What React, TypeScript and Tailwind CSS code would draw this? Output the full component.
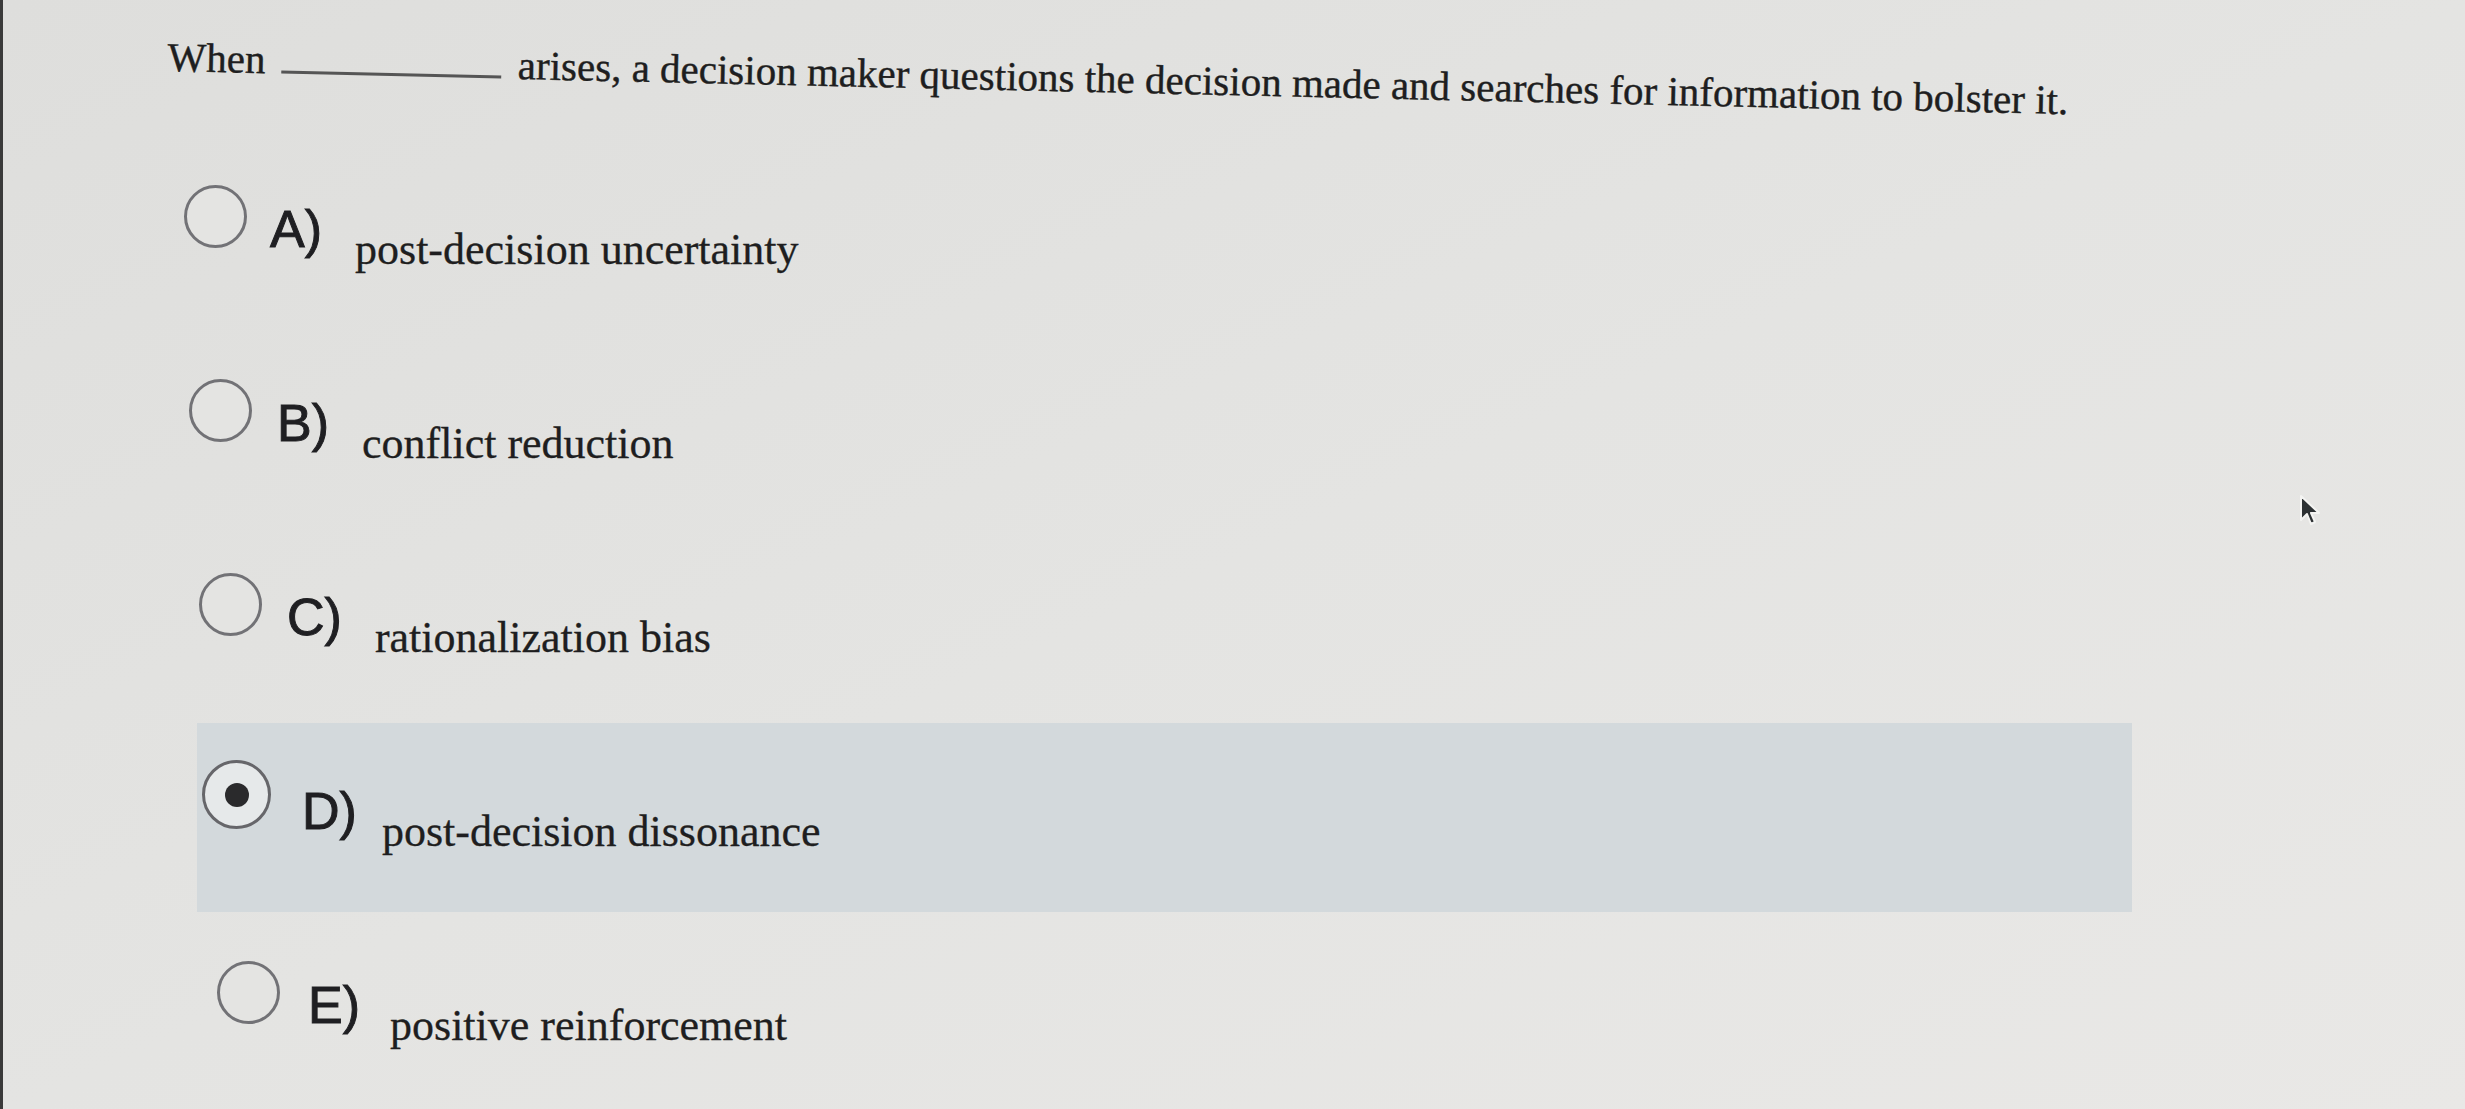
const options = [
  { key: "A", text: "post-decision uncertainty", row: "ml-[184px]", gapL: "ml-[23px]", gapT: "ml-[33px]", selected: false },
  { key: "B", text: "conflict reduction", row: "ml-[189px]", gapL: "ml-[25px]", gapT: "ml-[33px]", selected: false },
  { key: "C", text: "rationalization bias", row: "ml-[199px]", gapL: "ml-[25px]", gapT: "ml-[33px]", selected: false },
  { key: "D", text: "post-decision dissonance", row: "ml-[197px] pl-[5px]", gapL: "ml-[31px]", gapT: "ml-[25px]", selected: true },
  { key: "E", text: "positive reinforcement", row: "ml-[217px]", gapL: "ml-[28px]", gapT: "ml-[30px]", selected: false },
];

function Radio({ checked }: { checked: boolean }) {
  if (checked) {
    return (
      <span className="flex size-[69px] shrink-0 items-center justify-center rounded-full border-[3px] border-[#66666a] bg-[#e6e9ea]">
        <span className="size-[24px] rounded-full bg-[#2a2a2c]" />
      </span>
    );
  }
  return <span className="block size-[63px] shrink-0 rounded-full border-[3px] border-[#727276] bg-[#e4e4e2]" />;
}

function Cursor() {
  return (
    <svg className="absolute left-[2298px] top-[494px]" width="26" height="34" viewBox="0 0 26 34" aria-hidden>
      <path d="M3 2 L3 26 L9 20 L13 30 L17 28 L13 19 L21 19 Z" fill="#2d3133" stroke="#f4f4f2" strokeWidth="2" strokeLinejoin="round" />
    </svg>
  );
}

export default function App() {
  return (
    <div className="relative h-[1109px] w-[2465px] overflow-hidden bg-gradient-to-br from-[#dededc] via-[#e4e4e2] to-[#e9e8e6] font-['Liberation_Serif','Times_New_Roman',serif] text-[#1e1e20]">
      <div className="absolute inset-y-0 left-0 w-[3px] bg-[#3a3a3a]" />

      <p className="ml-[168px] pt-[37px] origin-left rotate-[1.3deg] whitespace-nowrap text-[41px] leading-none [-webkit-text-stroke:0.4px_#1e1e20]">
        When <span className="mx-[6px] inline-block w-[220px] border-b-[3px] border-[#555]" /> arises, a decision maker questions the decision made and searches for information to bolster it.
      </p>

      <div className="mt-[63px] flex flex-col gap-[5px]">
        {options.map((o) => (
          <div
            key={o.key}
            className={`flex h-[189px] w-[1935px] items-start ${o.row} ${o.selected ? "bg-[#d3d9dc]" : ""}`}
          >
            <div className={o.selected ? "mt-[37px]" : "mt-[44px]"}>
              <Radio checked={o.selected} />
            </div>
            <span className={`${o.gapL} mt-[62px] font-['Liberation_Sans',Arial,sans-serif] text-[52px] leading-none text-[#1f1f22] [-webkit-text-stroke:1px_#1f1f22]`}>
              {o.key})
            </span>
            <span className={`${o.gapT} mt-[87px] whitespace-nowrap text-[44px] leading-none [-webkit-text-stroke:0.3px_#1e1e20]`}>{o.text}</span>
          </div>
        ))}
      </div>

      <Cursor />
    </div>
  );
}
